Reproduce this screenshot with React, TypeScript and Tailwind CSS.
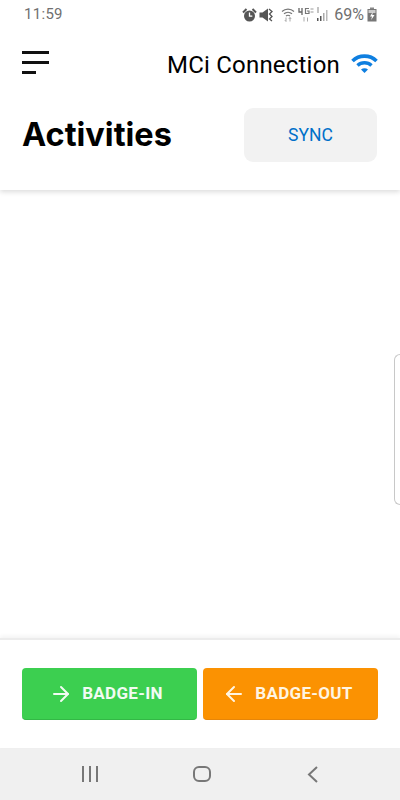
import React from 'react';
import { ArrowLeft, ArrowRight } from 'lucide-react';

const font = { fontFamily: 'Roboto, "Liberation Sans", sans-serif' };

function StatusIcons() {
  return (
    <div className="flex items-center text-[#6b6b6b]">
      {/* alarm */}
      <svg width="15" height="14" viewBox="0 0 15 14" className="mr-[2px]">
        <circle cx="7.500" cy="8" r="5.500" fill="#555" />
        <path d="M7.500 4.500v3.700h2.800" stroke="#fff" strokeWidth="1.300" fill="none" />
        <path d="M1 4.500l3.500-3.500M14 4.500L10.500 1" stroke="#555" strokeWidth="2" />
      </svg>
      {/* muted */}
      <svg width="15" height="14" viewBox="0 0 15 14" className="mr-[7px]">
        <path d="M0.500 4.500h3L9 0.500v13l-5.500-4h-3z" fill="#555" />
        <path d="M10 1l3 2.500-2.500 2.500 2.500 2.500-2.500 2.500 2.500 2" stroke="#555" strokeWidth="1.300" fill="none" />
      </svg>
      {/* wifi */}
      <svg width="14" height="15" viewBox="0 0 14 15" className="mr-[3px]">
        <path d="M1 4.500c3.400-3.200 8.600-3.200 12 0M3 6.800c2.300-2 5.700-2 8 0M5 9c1.200-.9 2.800-.9 4 0" stroke="#777" strokeWidth="1.200" fill="none" />
        <path d="M5 10.500v4M3.800 13l1.200 1.500M9 14.500v-4M7.800 12l1.200-1.500L10.200 12" stroke="#aaa" strokeWidth="1" fill="none" />
      </svg>
      {/* 4G+ */}
      <svg width="16" height="15" viewBox="0 0 16 15" className="mr-[2px]">
        <path d="M1 1v4h3M4 1v7" stroke="#666" strokeWidth="1.300" fill="none" />
        <path d="M11 1.500H7.500v5H11V4H9" stroke="#777" strokeWidth="1.200" fill="none" />
        <path d="M12.500 2h3M12.500 5h3" stroke="#999" strokeWidth="1.200" />
        <path d="M6 10v4.500M9.500 14.500v-4" stroke="#aaa" strokeWidth="1" />
      </svg>
      {/* signal */}
      <svg width="14" height="15" viewBox="0 0 14 15" className="mr-[4px]">
        <path d="M1 1h2M1 3h2M1 5h2" stroke="#888" strokeWidth="1" />
        <rect x="1" y="11" width="1.500" height="3" fill="#555" />
        <rect x="4" y="9" width="1.500" height="5" fill="#555" />
        <rect x="7" y="6" width="1.500" height="8" fill="#aaa" />
        <rect x="10" y="3" width="1.500" height="11" fill="#bbb" />
      </svg>
      <span className="text-[16px] leading-none text-[#707070] mr-[3px]">69%</span>
      {/* battery charging */}
      <svg width="10" height="15" viewBox="0 0 10 15">
        <rect x="3" y="0.500" width="4" height="2" fill="#888" />
        <rect x="0.500" y="2" width="9" height="12.500" fill="#777" />
        <rect x="1.500" y="3" width="7" height="3" fill="#ccc" />
        <path d="M5.800 5L3 9.500h2l-.8 3.500L7.500 8H5.300z" fill="#fff" />
      </svg>
    </div>
  );
}

export default function App() {
  return (
    <div className="relative h-[800px] w-[400px] overflow-hidden bg-white flex flex-col" style={font}>
      {/* Header */}
      <header className="h-[190px] shrink-0 shadow-[0_2px_5px_rgba(0,0,0,0.14)] relative z-10 bg-white">
        <div className="flex h-[29px] items-center justify-between pl-6 pr-[23px]">
          <span className="text-[15px] text-[#707070] tracking-[0.3px]">11:59</span>
          <StatusIcons />
        </div>

        <div className="flex items-center justify-between px-[22px] mt-[22px]">
          <div className="flex w-[27px] flex-col gap-[7px] -mt-[5px]">
            <div className="h-[3px] w-[27px] bg-[#111]" />
            <div className="h-[3px] w-[27px] bg-[#111]" />
            <div className="h-[3px] w-[14px] bg-[#111]" />
          </div>
          <div className="flex items-center">
            <span className="text-[24px] leading-[28px] tracking-[0.2px] text-black">MCi Connection</span>
            <svg width="27" height="21" viewBox="0 0 27 21" className="ml-[11px] -mt-[4px]">
              <path d="M1.500 8C8 1.500 19 1.500 25.500 8" stroke="#0f7fe0" strokeWidth="3.600" fill="none" />
              <path d="M6.500 12.500c3.800-3.600 10.200-3.600 14 0" stroke="#0f7fe0" strokeWidth="3.400" fill="none" />
              <path d="M10 16.500c2-1.700 5-1.700 7 0l-3.500 3.500z" fill="#0f7fe0" />
            </svg>
          </div>
        </div>

        <div className="flex items-center justify-between pl-[22px] pr-[23px] mt-[29px]">
          <h1 className="text-[32.500px] font-bold leading-[40px] text-black" style={{ fontFamily: 'Inter, Roboto, sans-serif' }}>Activities</h1>
          <button className="h-[54px] w-[133px] rounded-[9px] bg-[#f2f2f2] text-[17.500px] text-[#0070c9]">SYNC</button>
        </div>
      </header>

      <main className="flex-1" />

      {/* Edge panel handle */}
      <div className="absolute right-0 top-[354px] h-[151px] w-[6px] rounded-l-[6px] border border-r-0 border-[#c8c8c8]" />

      {/* Badge buttons */}
      <footer className="relative h-[110px] shrink-0 border-t-[2px] border-[#ececec] bg-white px-[22px] pt-[28px] shadow-[0_-2px_4px_rgba(0,0,0,0.05)]">
        <div className="flex gap-[6px]">
          <button className="flex h-[52px] w-[175px] items-center justify-center gap-[9px] rounded-[4px] bg-[#3ccf50] pr-[7px] text-[17px] font-bold tracking-[0.3px] text-[#f1fbf2] border-b border-[#33b846]">
            <ArrowRight size={24} strokeWidth={2} />
            BADGE-IN
          </button>
          <button className="flex h-[52px] w-[175px] items-center justify-center gap-[9px] rounded-[4px] bg-[#fb9202] pr-[6px] text-[17px] font-bold tracking-[0.3px] text-[#fff5e3] border-b border-[#e6860a]">
            <ArrowLeft size={24} strokeWidth={2} />
            BADGE-OUT
          </button>
        </div>
      </footer>

      {/* Android nav bar */}
      <nav className="flex h-[52px] shrink-0 items-center bg-[#f0f0f0] pl-[81px]">
        <svg width="18" height="16" viewBox="0 0 18 16">
          <path d="M2 0v16M9 0v16M16 0v16" stroke="#777" strokeWidth="2" />
        </svg>
        <svg width="18" height="16" viewBox="0 0 18 16" className="ml-[94px]">
          <rect x="1" y="1" width="16" height="14" rx="5" stroke="#777" strokeWidth="2" fill="none" />
        </svg>
        <svg width="12" height="17" viewBox="0 0 12 17" className="ml-[96px]">
          <path d="M10 1L2 8.500 10 16" stroke="#777" strokeWidth="2" fill="none" />
        </svg>
      </nav>
    </div>
  );
}
